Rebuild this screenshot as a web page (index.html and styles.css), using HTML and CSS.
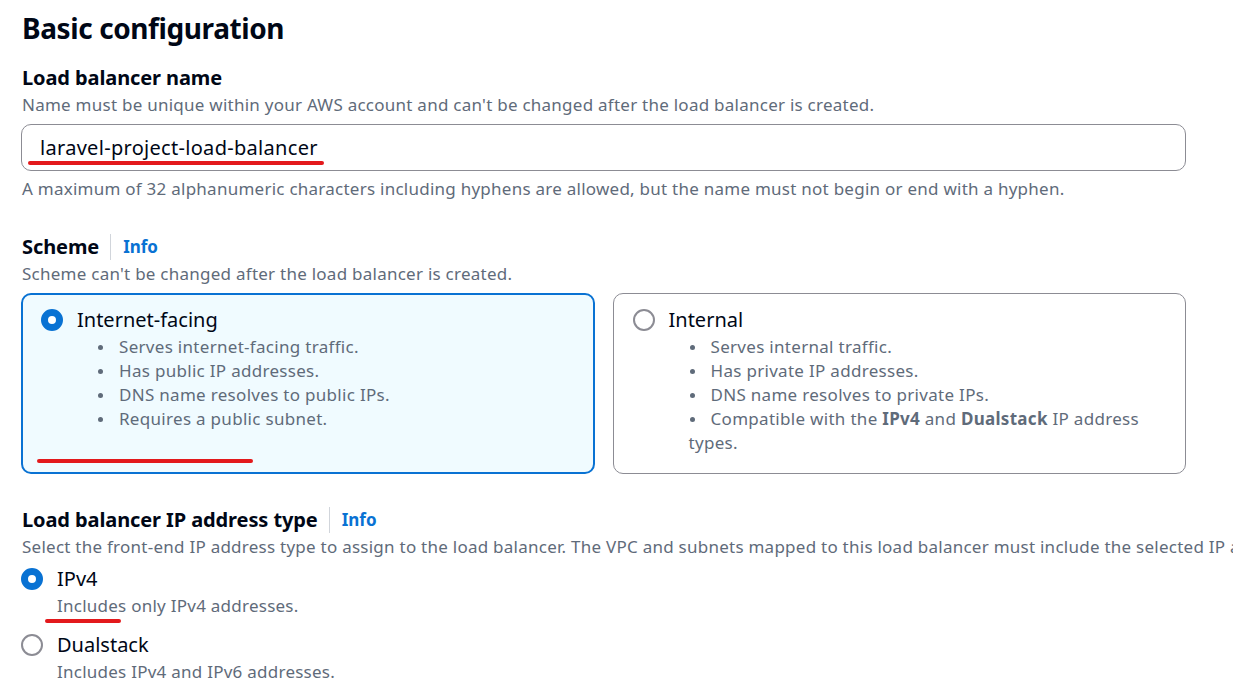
FILE: index.html
```html
<!DOCTYPE html>
<html lang="en">
<head>
<meta charset="utf-8">
<title>Basic configuration</title>
<link rel="stylesheet" href="styles.css">
</head>
<body>
<div class="page">
  <h2 class="title">Basic configuration</h2>

  <section class="field">
    <div class="label-row"><span class="label">Load balancer name</span></div>
    <div class="desc">Name must be unique within your AWS account and can't be changed after the load balancer is created.</div>
    <div class="input">
      <span class="input-text">laravel-project-load-balancer</span>
      <span class="mark mark-input"></span>
    </div>
    <div class="desc constraint">A maximum of 32 alphanumeric characters including hyphens are allowed, but the name must not begin or end with a hyphen.</div>
  </section>

  <section class="field scheme">
    <div class="label-row"><span class="label">Scheme</span><span class="divider"></span><a class="info">Info</a></div>
    <div class="desc">Scheme can't be changed after the load balancer is created.</div>
    <div class="cards">
      <div class="card selected">
        <div class="radio-row"><span class="radio checked"></span><span class="radio-label">Internet-facing</span></div>
        <ul class="bullets">
          <li>Serves internet-facing traffic.</li>
          <li>Has public IP addresses.</li>
          <li>DNS name resolves to public IPs.</li>
          <li>Requires a public subnet.</li>
        </ul>
        <span class="mark mark-card"></span>
      </div>
      <div class="card">
        <div class="radio-row"><span class="radio"></span><span class="radio-label">Internal</span></div>
        <ul class="bullets">
          <li>Serves internal traffic.</li>
          <li>Has private IP addresses.</li>
          <li>DNS name resolves to private IPs.</li>
          <li>Compatible with the <b>IPv4</b> and <b>Dualstack</b> IP address types.</li>
        </ul>
      </div>
    </div>
  </section>

  <section class="field iptype">
    <div class="label-row"><span class="label">Load balancer IP address type</span><span class="divider"></span><a class="info">Info</a></div>
    <div class="desc nowrap">Select the front-end IP address type to assign to the load balancer. The VPC and subnets mapped to this load balancer must include the selected IP address type.</div>
    <div class="option first">
      <div class="radio-row"><span class="radio checked"></span><span class="radio-label">IPv4</span></div>
      <div class="option-desc">Includes only IPv4 addresses.<span class="mark mark-option"></span></div>
    </div>
    <div class="option second">
      <div class="radio-row"><span class="radio"></span><span class="radio-label">Dualstack</span></div>
      <div class="option-desc">Includes IPv4 and IPv6 addresses.</div>
    </div>
  </section>
</div>
</body>
</html>
```

FILE: styles.css
```css
html, body {
  margin: 0;
  padding: 0;
  background: #ffffff;
  overflow: hidden;
}

body {
  font-family: "Noto Sans", "Open Sans", sans-serif;
  color: #000716;
  width: 1233px;
  height: 679px;
}

.page {
  padding: 10px 0 0 21px;
  width: 1165px;
}

.title {
  margin: 0 0 0 1px;
  font-size: 28px;
  line-height: 36px;
  font-weight: 700;
  letter-spacing: -0.4px;
}

.field {
  margin-top: 20px;
}

.label-row {
  display: flex;
  align-items: center;
  height: 24px;
  margin-left: 1px;
}

.label {
  font-size: 20px;
  font-weight: 700;
  line-height: 24px;
  letter-spacing: -0.1px;
}

.divider {
  width: 1px;
  height: 26px;
  background: #d1d5db;
  margin: 0 12px 0 11px;
}

.info {
  color: #0972d3;
  font-weight: 700;
  font-size: 17px;
  line-height: 24px;
}

.desc {
  margin-top: 4px;
  font-size: 17px;
  letter-spacing: 0.25px;
  line-height: 22px;
  color: #5f6b7a;
  margin-left: 1px;
}

.nowrap {
  white-space: nowrap;
}

.input {
  position: relative;
  margin-top: 8px;
  height: 45px;
  border: 1px solid #8c8c94;
  border-radius: 10px;
  display: flex;
  align-items: center;
  padding-left: 18px;
}

.input-text {
  font-size: 20px;
  letter-spacing: 0.3px;
  color: #000716;
}

.constraint {
  margin-top: 7px;
}

.scheme {
  margin-top: 35px;
}

.cards {
  margin-top: 8px;
  display: grid;
  grid-template-columns: 1fr 1fr;
  column-gap: 18px;
}

.card {
  position: relative;
  border: 1px solid #8c8c94;
  border-radius: 10px;
  padding: 14px 40px 18px 19px;
  min-height: 147px;
}

.card.selected {
  border: 2px solid #0972d3;
  background: #f0fbff;
  padding: 13px 39px 17px 18px;
}

.radio-row {
  display: flex;
  align-items: center;
  height: 24px;
}

.radio {
  box-sizing: border-box;
  width: 22px;
  height: 22px;
  border-radius: 50%;
  border: 2px solid #8c8c94;
  background: #ffffff;
  flex: none;
}

.radio.checked {
  border: 7px solid #0972d3;
}

.radio-label {
  margin-left: 14px;
  font-size: 20px;
  line-height: 24px;
  color: #000716;
}

.bullets {
  list-style: none;
  margin: 3px 0 0 0;
  padding: 0 0 0 56px;
  font-size: 17px;
  letter-spacing: 0.3px;
  line-height: 24px;
  color: #5f6b7a;
}

.bullets li::before {
  content: "";
  display: inline-block;
  width: 5px;
  height: 5px;
  border-radius: 50%;
  background: #5f6b7a;
  margin: 0 16px 2px 1px;
  vertical-align: middle;
}

.bullets b {
  font-weight: 700;
}

.mark {
  position: absolute;
  height: 4px;
  border-radius: 2px;
  background: #e3191c;
}

.mark-input {
  left: 6px;
  top: 36px;
  width: 296px;
}

.mark-card {
  left: 14px;
  top: 164px;
  width: 216px;
}

.iptype {
  margin-top: 34px;
}

.option.first {
  margin-top: 9px;
}

.option.second {
  margin-top: 16px;
}

.option-desc {
  position: relative;
  margin: 4px 0 0 36px;
  font-size: 17px;
  letter-spacing: 0.25px;
  line-height: 22px;
  color: #5f6b7a;
}

.mark-option {
  left: -12px;
  top: 24px;
  width: 76px;
}
```
